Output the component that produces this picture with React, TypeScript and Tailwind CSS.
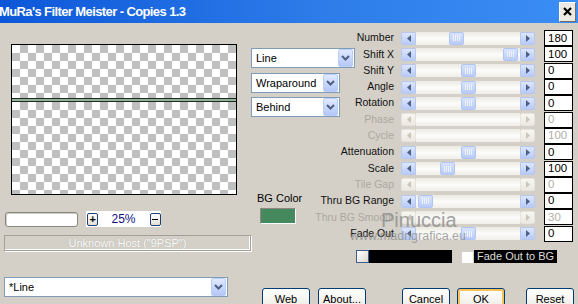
import React from 'react';

interface SliderRow {
  label: string;
  value: string;
  thumb?: number;
  disabled?: boolean;
}

const rows: SliderRow[] = [
  { label: 'Number', value: '180', thumb: 33 },
  { label: 'Shift X', value: '100', thumb: 87 },
  { label: 'Shift Y', value: '0', thumb: 45 },
  { label: 'Angle', value: '0', thumb: 45 },
  { label: 'Rotation', value: '0', thumb: 45 },
  { label: 'Phase', value: '0', disabled: true },
  { label: 'Cycle', value: '100', disabled: true },
  { label: 'Attenuation', value: '0', thumb: 45 },
  { label: 'Scale', value: '100', thumb: 24 },
  { label: 'Tile Gap', value: '0', disabled: true },
  { label: 'Thru BG Range', value: '0', thumb: 2 },
  { label: 'Thru BG Smooth', value: '30', disabled: true },
  { label: 'Fade Out', value: '0', thumb: 45 },
];

function Chevron() {
  return (
    <svg width="9" height="6" viewBox="0 0 9 6">
      <polyline points="1,1 4.5,4.5 8,1" fill="none" stroke="#4d6185" strokeWidth="2" />
    </svg>
  );
}

function Select({ text, width }: { text: string; width: string }) {
  return (
    <div className={`flex h-[20px] items-center border border-[#7f9db9] bg-white ${width}`}>
      <span className="flex-1 pl-[4px] text-[11px] text-black">{text}</span>
      <div className="mr-[1px] flex h-[18px] w-[15px] items-center justify-center rounded-[2px] border border-[#bccdf5] bg-gradient-to-b from-[#e0e9fe] to-[#b4c8f6]">
        <Chevron />
      </div>
    </div>
  );
}

function ArrowButton({ dir, disabled }: { dir: 'left' | 'right'; disabled?: boolean }) {
  const fill = disabled ? '#c9c6b8' : '#4d6185';
  return (
    <div
      className={`flex h-[13px] w-[15px] items-center justify-center rounded-[2px] border ${
        disabled
          ? 'border-[#e6e4dc] bg-gradient-to-b from-[#f7f6f1] to-[#ebe9e1]'
          : 'border-[#b6c8f2] bg-gradient-to-b from-[#dce6fe] to-[#b8cbf7]'
      }`}
    >
      <svg width="6" height="7" viewBox="0 0 6 7">
        {dir === 'left' ? (
          <polygon points="5,0 5,7 1,3.5" fill={fill} />
        ) : (
          <polygon points="1,0 1,7 5,3.5" fill={fill} />
        )}
      </svg>
    </div>
  );
}

function ScrollBar({ thumb, disabled }: { thumb?: number; disabled?: boolean }) {
  return (
    <div className="flex h-[13px] w-[134px] items-center">
      <ArrowButton dir="left" disabled={disabled} />
      <div className="relative h-[13px] flex-1 bg-gradient-to-b from-[#ebe9e1] via-[#fcfcfa] to-[#f0eee8]">
        {!disabled && thumb !== undefined && (
          <div
            className="absolute top-0 flex h-[13px] w-[15px] items-center justify-center rounded-[2px] border border-[#b0c5f3] bg-gradient-to-b from-[#d8e3fd] to-[#b9ccf8]"
            style={{ left: thumb }}
          >
            <svg width="8" height="6" viewBox="0 0 8 6">
              <line x1="0.5" y1="0" x2="0.5" y2="6" stroke="#eef3ff" />
              <line x1="2.5" y1="0" x2="2.5" y2="6" stroke="#eef3ff" />
              <line x1="4.5" y1="0" x2="4.5" y2="6" stroke="#eef3ff" />
              <line x1="6.5" y1="0" x2="6.5" y2="6" stroke="#eef3ff" />
            </svg>
          </div>
        )}
      </div>
      <ArrowButton dir="right" disabled={disabled} />
    </div>
  );
}

function Button({ children, isDefault, className }: { children: React.ReactNode; isDefault?: boolean; className: string }) {
  return (
    <div
      className={`flex h-[23px] w-[48px] items-start justify-center rounded-[3px] border border-[#003c74] bg-gradient-to-b from-white to-[#ece9e0] pt-[2px] text-[11px] text-black ${
        isDefault ? 'shadow-[inset_0_0_0_2px_#f9c25a]' : ''
      } ${className}`}
    >
      {children}
    </div>
  );
}

const checker =
  'bg-white bg-[image:conic-gradient(#c0c0c0_25%,#ffffff_0_50%,#c0c0c0_0_75%,#ffffff_0)] bg-[length:16px_16px]';

export default function App() {
  return (
    <div className="h-[304px] w-[578px] overflow-hidden bg-[#d4d0c8] font-['Liberation_Sans',Arial,sans-serif]">
      {/* title bar */}
      <div className="flex h-[23px] items-center bg-[linear-gradient(to_right,#0c57d9,#2d7ce9_55%,#3b8ef4)]">
        <span className="-ml-[1px] text-[13px] font-bold tracking-[-0.6px] text-white">
          MuRa's Filter Meister - Copies 1.3
        </span>
        <div className="ml-auto mr-[2px] flex h-[20px] w-[17px] items-center justify-center border border-b-[#6f6d66] border-l-white border-r-[#6f6d66] border-t-white bg-[#ebe9e2]">
          <svg width="9" height="9" viewBox="0 0 9 9">
            <path d="M1 1 L8 8 M8 1 L1 8" stroke="#000" strokeWidth="2.2" />
          </svg>
        </div>
      </div>

      <div className="relative flex h-[242px]">
        {/* left column: preview */}
        <div className="flex w-[251px] flex-col pl-[4px]">
          <div className="ml-[7px] mt-[21px] flex h-[151px] w-[226px] flex-col border border-black">
            <div className={`h-[53px] ${checker}`} />
            <div className="h-[4px] border-y border-[#1f2a22] bg-[#93b39a]" />
            <div className={`flex-1 ${checker}`} />
          </div>
          <div className="mt-[16px] flex items-center">
            <div className="ml-[1px] h-[15px] w-[73px] rounded-[3px] border border-[#8a8780] bg-white shadow-[inset_1px_1px_0_#cfccc4]" />
            <div className="ml-[8px] flex h-[16px] w-[75px] items-center bg-white">
              <div className="ml-[1px] flex h-[13px] w-[12px] items-center justify-center rounded-[2px] border border-[#1d3f73] bg-gradient-to-b from-white to-[#e2e0d8] text-[11px] font-bold leading-none text-black">
                +
              </div>
              <span className="ml-[13px] text-[12px] text-[#141480]">25%</span>
              <div className="ml-[14px] flex h-[13px] w-[12px] items-center justify-center rounded-[2px] border border-[#1d3f73] bg-gradient-to-b from-white to-[#e2e0d8]">
                <div className="h-[1px] w-[6px] bg-black" />
              </div>
            </div>
          </div>
          <div className="mt-[8px] flex h-[16px] w-[247px] items-center justify-center border border-[#a3a098] shadow-[inset_-1px_-1px_0_#ffffff,1px_1px_0_#ffffff] text-[11px] text-[#fdfdfd] [text-shadow:0_0_1px_#a29f97]">
            Unknown Host ("9PSP")
          </div>
        </div>

        {/* middle column: modes and BG colour */}
        <div className="flex w-[104px] flex-col">
          <div className="mt-[25px]">
            <Select text="Line" width="w-[104px]" />
          </div>
          <div className="mt-[5px]">
            <Select text="Wraparound" width="w-[89px]" />
          </div>
          <div className="mt-[4px]">
            <Select text="Behind" width="w-[89px]" />
          </div>
          <span className="ml-[6px] mt-[75px] text-[11px] leading-[13px] text-black">BG Color</span>
          <div className="ml-[9px] mt-[3px] h-[16px] w-[36px] border border-b-white border-l-[#8d8a82] border-r-white border-t-[#8d8a82] bg-[#47895f]" />
        </div>

        {/* right column: sliders */}
        <div className="flex flex-1 flex-col pt-[7px]">
          {rows.map((r) => (
            <div key={r.label} className="flex h-[16.3px] items-center">
              <div
                className={`flex w-[39px] justify-end whitespace-nowrap text-[10.5px] ${
                  r.disabled ? 'text-[#aba89f]' : 'text-[#111111]'
                }`}
              >
                {r.label}
              </div>
              <div className="ml-[7px]">
                <ScrollBar thumb={r.thumb} disabled={r.disabled} />
              </div>
              <div
                className={`ml-[9px] flex h-[16px] w-[29px] items-center border border-black bg-white pl-[3px] text-[11.5px] ${
                  r.disabled ? 'text-[#b2afa6]' : 'text-black'
                }`}
              >
                {r.value}
              </div>
            </div>
          ))}
          <div className="ml-[1px] mt-[8px] flex h-[13px] items-center">
            <div className="h-[13px] w-[13px] border border-[#3f5f8f] bg-gradient-to-br from-white to-[#dcdad2]" />
            <div className="h-[13px] w-[83px] bg-black" />
            <div className="ml-[10px] mt-[2px] h-[11px] w-[11px] bg-white" />
            <div className="ml-[1px] flex h-[13px] w-[83px] items-center bg-black pl-[3px] text-[11px] text-[#dcdcdc]">
              Fade Out to BG
            </div>
          </div>
        </div>

        {/* watermark over the panel */}
        <div className="pointer-events-none absolute left-[381px] top-[187px] text-[20px] leading-none text-[#8d8d8d] opacity-80">
          Pinuccia
        </div>
        <div className="pointer-events-none absolute left-[350px] top-[207px] text-[12.5px] leading-none text-[#8a8a8a] opacity-75">
          www.madrigrafica.eu
        </div>
      </div>

      {/* bottom row */}
      <div className="flex h-[39px]">
        <div className="ml-[4px] mt-[12px]">
          <Select text="*Line" width="w-[224px]" />
        </div>
        <div className="ml-[34px] mt-[23px] flex">
          <Button className="">Web</Button>
          <Button className="ml-[8px]">About...</Button>
          <Button className="ml-[36px]">Cancel</Button>
          <Button className="ml-[7px]" isDefault>
            OK
          </Button>
          <Button className="ml-[21px]">Reset</Button>
        </div>
      </div>
    </div>
  );
}
